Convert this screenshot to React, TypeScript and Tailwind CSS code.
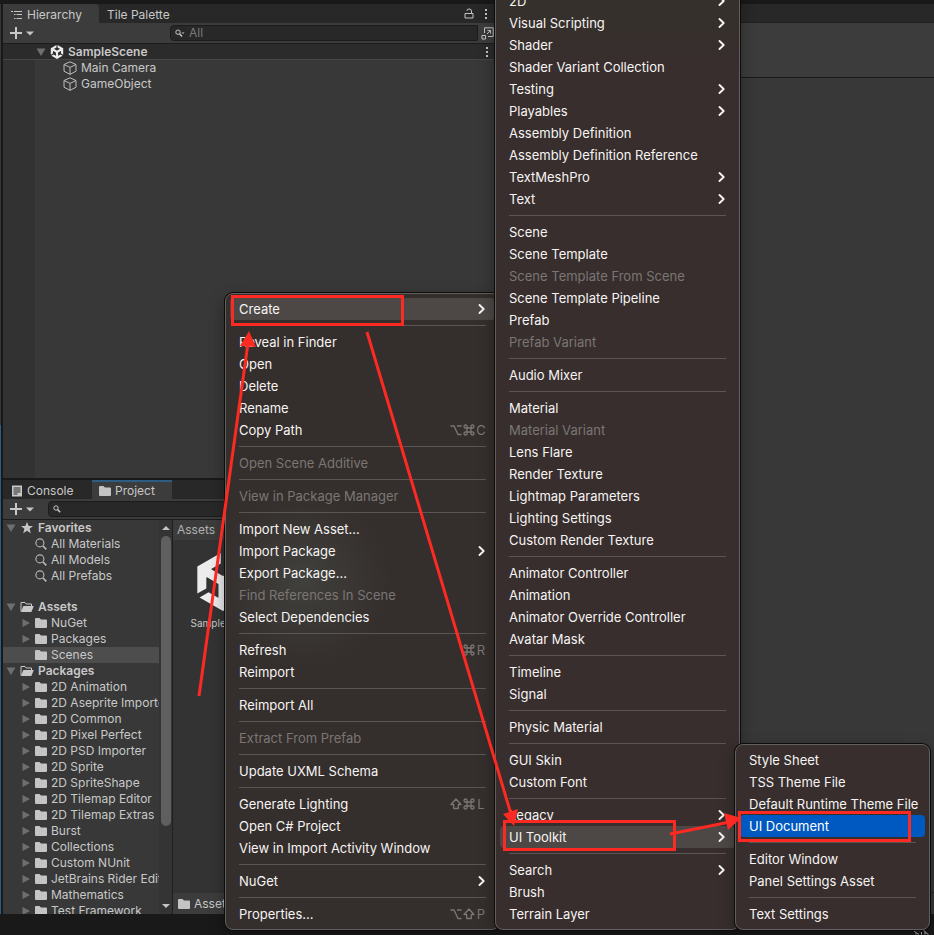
import React from "react";
import { clsx } from "clsx";
import { SiUnity } from "react-icons/si";

type Item =
  | "-"
  | { label: string; disabled?: boolean; sub?: boolean; keys?: string; state?: "open" | "picked" };

const i = (label: string): Item => ({ label });
const sub = (label: string): Item => ({ label, sub: true });
const off = (label: string): Item => ({ label, disabled: true });

const contextMenu: Item[] = [
  { label: "Create", sub: true, state: "open" },
  "-",
  i("Reveal in Finder"),
  i("Open"),
  i("Delete"),
  i("Rename"),
  { label: "Copy Path", keys: "⌥⌘C" },
  "-",
  off("Open Scene Additive"),
  "-",
  off("View in Package Manager"),
  "-",
  i("Import New Asset..."),
  sub("Import Package"),
  i("Export Package..."),
  off("Find References In Scene"),
  i("Select Dependencies"),
  "-",
  { label: "Refresh", keys: "⌘R" },
  i("Reimport"),
  "-",
  i("Reimport All"),
  "-",
  off("Extract From Prefab"),
  "-",
  i("Update UXML Schema"),
  "-",
  { label: "Generate Lighting", keys: "⇧⌘L" },
  i("Open C# Project"),
  i("View in Import Activity Window"),
  "-",
  sub("NuGet"),
  "-",
  { label: "Properties...", keys: "⌥⇧P" },
];

const createMenu: Item[] = [
  sub("2D"),
  sub("Visual Scripting"),
  sub("Shader"),
  i("Shader Variant Collection"),
  sub("Testing"),
  sub("Playables"),
  i("Assembly Definition"),
  i("Assembly Definition Reference"),
  sub("TextMeshPro"),
  sub("Text"),
  "-",
  i("Scene"),
  i("Scene Template"),
  off("Scene Template From Scene"),
  i("Scene Template Pipeline"),
  i("Prefab"),
  off("Prefab Variant"),
  "-",
  i("Audio Mixer"),
  "-",
  i("Material"),
  off("Material Variant"),
  i("Lens Flare"),
  i("Render Texture"),
  i("Lightmap Parameters"),
  i("Lighting Settings"),
  i("Custom Render Texture"),
  "-",
  i("Animator Controller"),
  i("Animation"),
  i("Animator Override Controller"),
  i("Avatar Mask"),
  "-",
  i("Timeline"),
  i("Signal"),
  "-",
  i("Physic Material"),
  "-",
  i("GUI Skin"),
  i("Custom Font"),
  "-",
  sub("Legacy"),
  { label: "UI Toolkit", sub: true, state: "open" },
  "-",
  sub("Search"),
  i("Brush"),
  i("Terrain Layer"),
];

const toolkitMenu: Item[] = [
  i("Style Sheet"),
  i("TSS Theme File"),
  i("Default Runtime Theme File"),
  { label: "UI Document", state: "picked" },
  "-",
  i("Editor Window"),
  i("Panel Settings Asset"),
  "-",
  i("Text Settings"),
];

const packages = [
  "2D Animation",
  "2D Aseprite Importer",
  "2D Common",
  "2D Pixel Perfect",
  "2D PSD Importer",
  "2D Sprite",
  "2D SpriteShape",
  "2D Tilemap Editor",
  "2D Tilemap Extras",
  "Burst",
  "Collections",
  "Custom NUnit",
  "JetBrains Rider Editor",
  "Mathematics",
  "Test Framework",
];

function KeyGlyph({ glyph }: { glyph: string }) {
  const common = { width: 12, height: 12, fill: "none", stroke: "currentColor", strokeWidth: 1.3 };
  if (glyph === "⌥")
    return (
      <svg viewBox="0 0 12 12" {...common} aria-label="Option">
        <path d="M0.5 2H4L8 10.5H11.5M7 2H11.5" />
      </svg>
    );
  if (glyph === "⌘")
    return (
      <svg viewBox="0 0 12 12" {...common} aria-label="Command">
        <path d="M4 4H8V8H4ZM4 4H2.7A1.5 1.5 0 1 1 4 2.7ZM8 4V2.7A1.5 1.5 0 1 1 9.3 4ZM8 8H9.3A1.5 1.5 0 1 1 8 9.3ZM4 8V9.3A1.5 1.5 0 1 1 2.7 8Z" />
      </svg>
    );
  if (glyph === "⇧")
    return (
      <svg viewBox="0 0 12 12" {...common} aria-label="Shift">
        <path d="M6 1L11 6.5H8.3V10.5H3.7V6.5H1Z" strokeLinejoin="round" />
      </svg>
    );
  return <span className="w-[10px] text-center">{glyph}</span>;
}

function Menu({ items, label, className }: { items: Item[]; label: string; className: string }) {
  return (
    <div
      role="menu"
      aria-label={label}
      className={clsx(
        "absolute flex flex-col rounded-lg border border-[#62605e] p-1 text-[13px] font-normal text-[#f6f4f3] shadow-[0_0_0_1px_#0c0c0c,0_6px_16px_rgba(0,0,0,0.35)]",
        className
      )}
    >
      {items.map((item, n) =>
        item === "-" ? (
          <div key={n} role="separator" className="mx-[9px] flex h-[11px] items-center">
            <div className="h-px w-full bg-[#5a5654]" />
          </div>
        ) : (
          <button
            key={n}
            type="button"
            role="menuitem"
            disabled={item.disabled}
            className={clsx(
              "flex h-[22px] w-full items-center justify-between rounded px-[9px] text-left whitespace-nowrap",
              item.disabled && "text-[#7b7674]",
              item.state === "open" && "bg-[#4d4846]",
              item.state === "picked" && "bg-[#0059c1] text-white"
            )}
          >
            <span>{item.label}</span>
            {item.sub && (
              <svg width="8" height="12" viewBox="0 0 8 12" fill="none" stroke="currentColor" strokeWidth="1.9" strokeLinecap="round" strokeLinejoin="round" aria-hidden="true">
                <path d="M1.5 2L5.7 6L1.5 10" />
              </svg>
            )}
            {item.keys && (
              <span className="flex items-center gap-px text-[#7b7674]">
                {item.keys.split("").map((k) => (
                  <KeyGlyph key={k} glyph={k} />
                ))}
              </span>
            )}
          </button>
        )
      )}
    </div>
  );
}

function Folder({ open }: { open?: boolean }) {
  return open ? (
    <svg className="shrink-0" width="14" height="12" viewBox="0 0 14 12" fill="none" aria-hidden="true">
      <path d="M1 10.5V1.5H5L6.2 3H11.5V5" stroke="#c8c8c8" />
      <path d="M3.4 5H13.8L11.4 11H0.8Z" fill="#c8c8c8" />
    </svg>
  ) : (
    <svg className="shrink-0" width="12" height="12" viewBox="0 0 12 12" fill="#c4c4c4" aria-hidden="true">
      <path d="M0 2Q0 1 1 1H4.5L6 2.6H11Q12 2.6 12 3.6V10Q12 11 11 11H1Q0 11 0 10Z" />
    </svg>
  );
}

function Fold({ open, hidden }: { open?: boolean; hidden?: boolean }) {
  return (
    <svg className={clsx("shrink-0", hidden && "invisible")} width="10" height="10" viewBox="0 0 10 10" fill="#6e6e6e" aria-hidden="true">
      <path d={open ? "M0.5 1.5H9.5L5 9Z" : "M1.5 1L9 5L1.5 9Z"} />
    </svg>
  );
}

function Lens() {
  return (
    <svg className="shrink-0" width="12" height="12" viewBox="0 0 12 12" fill="none" stroke="#b8b8b8" aria-hidden="true">
      <circle cx="4.9" cy="4.9" r="4" strokeWidth="1.1" />
      <path d="M8 8L11.3 11.3" strokeWidth="1.7" />
    </svg>
  );
}

function Cube() {
  return (
    <svg className="shrink-0" width="14" height="14" viewBox="0 0 14 14" fill="none" stroke="#bdbdbd" strokeLinejoin="round" aria-hidden="true">
      <path d="M7 0.8L13 3.5V10.2L7 13.4L1 10.2V3.5ZM1 3.5L7 6.4L13 3.5M7 6.4V13.4" />
    </svg>
  );
}

function Dots() {
  return (
    <svg width="4" height="12" viewBox="0 0 4 12" fill="#c4c4c4" aria-hidden="true">
      <path d="M1 1h2v2H1ZM1 5h2v2H1ZM1 9h2v2H1Z" />
    </svg>
  );
}

function AddButton() {
  return (
    <button type="button" aria-label="Add" className="flex shrink-0 items-center gap-1">
      <svg width="12" height="12" viewBox="0 0 12 12" stroke="#c8c8c8" strokeWidth="2" aria-hidden="true">
        <path d="M6 0V12M0 6H12" />
      </svg>
      <svg width="8" height="5" viewBox="0 0 8 5" fill="#c4c4c4" aria-hidden="true">
        <path d="M0 0.5H8L4 4.5Z" />
      </svg>
    </button>
  );
}

function TreeRow({ label, head, open, icon, selected, leaf }: { label: string; head?: boolean; open?: boolean; icon: React.ReactNode; selected?: boolean; leaf?: boolean }) {
  return (
    <li
      className={clsx(
        "flex h-4 shrink-0 items-center gap-1 overflow-hidden whitespace-nowrap",
        head ? "pl-[3px] font-semibold" : "pl-[18px]",
        selected && "bg-[#4d4d4d]"
      )}
    >
      <Fold open={open} hidden={leaf} />
      {icon}
      <span>{label}</span>
    </li>
  );
}

function Hierarchy() {
  return (
    <section aria-label="Hierarchy" className="flex h-[474px] shrink-0 flex-col bg-[#383838]">
      <div className="flex h-[19px] shrink-0 items-center bg-[#282828]">
        <button type="button" className="flex h-full w-24 items-center gap-1 rounded-tr bg-[#3c3c3c] pt-[2px] pl-2">
          <svg width="12" height="10" viewBox="0 0 12 10" stroke="#c4c4c4" aria-hidden="true">
            <path d="M0 1.5H2M3 1.5H11M3 4.5H4.5M5.5 4.5H11M3 8.5H4.5M5.5 8.5H11" />
          </svg>
          Hierarchy
        </button>
        <button type="button" className="ml-2 flex-1 pt-[2px] text-left">Tile Palette</button>
        <svg width="10" height="11" viewBox="0 0 10 11" fill="none" stroke="#c4c4c4" aria-hidden="true">
          <path d="M1 5.5H9V10H1ZM3 3V2.5Q3 1 5 1Q7.5 1 7.5 3V5.5" />
        </svg>
        <span className="mr-2 ml-[10px] flex"><Dots /></span>
      </div>
      <div className="flex h-[20px] shrink-0 items-center bg-[#3c3c3c] pl-[7px]">
        <AddButton />
        <label className="ml-[136px] flex h-4 min-w-0 flex-1 items-center gap-1 rounded-l border border-[#1c1c1c] bg-[#282828] pl-1">
          <svg width="10" height="9" viewBox="0 0 10 9" fill="none" stroke="#c4c4c4" aria-hidden="true">
            <circle cx="3" cy="3.2" r="2.2" />
            <path d="M4.6 4.8L7 7.5" strokeWidth="1.5" />
            <path d="M6.5 3.5H9.5L8 5Z" fill="#c4c4c4" stroke="none" />
          </svg>
          <input aria-label="Search hierarchy" placeholder="All" className="min-w-0 flex-1 bg-transparent text-xs outline-none placeholder:text-[#7a7a7a]" />
        </label>
        <button type="button" aria-label="Open search window" className="flex w-[18px] justify-center">
          <svg width="13" height="13" viewBox="0 0 13 13" fill="none" stroke="#c4c4c4" aria-hidden="true">
            <path d="M3.5 6V0.8H12.2V9.5H7M1 8.5H4.5V12H1ZM6 7L9.5 3.5M6.5 3.5H9.5V6.5" />
          </svg>
        </button>
      </div>
      <div className="flex h-[17px] shrink-0 items-center gap-1 border-y border-t-[#1c1c1c] border-b-[#454545] bg-[#2b2b2b] pl-[33px] font-semibold">
        <Fold open />
        <SiUnity size={14} className="shrink-0 text-[#ececec]" aria-hidden="true" />
        <span className="flex-1">SampleScene</span>
        <span className="mr-[7px]"><Dots /></span>
      </div>
      <div className="flex min-h-0 flex-1">
        <div className="w-8 shrink-0 bg-[#323232]" />
        <ul className="flex flex-1 flex-col pl-7">
          {["Main Camera", "GameObject"].map((name) => (
            <li key={name} className="flex h-4 items-center gap-1">
              <Cube />
              {name}
            </li>
          ))}
        </ul>
      </div>
    </section>
  );
}

function Project() {
  return (
    <section aria-label="Project" className="flex min-h-0 flex-1 flex-col bg-[#383838]">
      <div className="flex h-[19px] shrink-0 items-center bg-[#282828]">
        <button type="button" className="flex h-full w-[89px] items-center gap-1 pt-[2px] pl-2">
          <svg width="12" height="12" viewBox="0 0 12 12" aria-hidden="true">
            <path d="M1 0.5H11V11.5H1Z" fill="#c8c8c8" />
            <path d="M2.5 3H9.5M2.5 5H9.5M2.5 7H9.5M2.5 9H6.5" stroke="#282828" />
          </svg>
          Console
        </button>
        <button type="button" className="flex h-full w-20 items-center gap-1 border-t-2 border-[#2c5d87] bg-[#3c3c3c] pl-[7px]">
          <Folder />
          Project
        </button>
      </div>
      <div className="flex h-[21px] shrink-0 items-center border-b border-[#1c1c1c] bg-[#3c3c3c] pl-[7px]">
        <AddButton />
        <label className="ml-[14px] flex h-4 flex-1 items-center gap-1 rounded-l border border-[#1c1c1c] bg-[#282828] pl-1">
          <svg width="8" height="8" viewBox="0 0 8 8" fill="none" stroke="#c4c4c4" aria-hidden="true">
            <circle cx="3" cy="3" r="2.2" />
            <path d="M4.6 4.6L7.2 7.2" strokeWidth="1.5" />
          </svg>
          <input aria-label="Search project" className="min-w-0 flex-1 bg-transparent text-xs outline-none" />
        </label>
      </div>
      <div className="flex min-h-0 flex-1">
        <ul className="flex w-[156px] shrink-0 flex-col overflow-hidden">
          <TreeRow head open label="Favorites" icon={
            <svg width="14" height="12" viewBox="0 0 14 12" fill="#c4c4c4" aria-hidden="true">
              <path d="M7 0L8.7 4H13L9.6 6.8L10.8 11.2L7 8.7L3.2 11.2L4.4 6.8L1 4H5.3Z" />
            </svg>
          } />
          {["All Materials", "All Models", "All Prefabs"].map((s) => (
            <TreeRow key={s} leaf label={s} icon={<Lens />} />
          ))}
          <li aria-hidden="true" className="h-[15px] shrink-0" />
          <TreeRow head open label="Assets" icon={<Folder open />} />
          <TreeRow label="NuGet" icon={<Folder />} />
          <TreeRow label="Packages" icon={<Folder />} />
          <TreeRow leaf selected label="Scenes" icon={<Folder />} />
          <TreeRow head open label="Packages" icon={<Folder open />} />
          {packages.map((p) => (
            <TreeRow key={p} label={p} icon={<Folder />} />
          ))}
        </ul>
        <div className="flex w-[14px] shrink-0 flex-col items-center border-r border-[#1f1f1f] bg-[#343434] py-1">
          <svg width="8" height="4" viewBox="0 0 8 4" fill="#c4c4c4" className="mt-[2px]" aria-hidden="true"><path d="M0 4H8L4 0Z" /></svg>
          <div className="mt-[6px] h-[290px] w-[10px] shrink-0 rounded-full bg-[#5f5f5f]" />
          <svg className="mt-auto mb-[2px]" width="8" height="4" viewBox="0 0 8 4" fill="#c4c4c4" aria-hidden="true"><path d="M0 0H8L4 4Z" /></svg>
        </div>
        <div className="flex min-w-0 flex-1 flex-col bg-[#333333]">
          <div className="flex h-5 shrink-0 items-center bg-[#3c3c3c] pl-1 text-[#b0b0b0]">Assets</div>
          <div className="flex w-[100px] flex-1 flex-col items-center gap-1 pt-[13px] text-[10px]">
            <SiUnity size={58} className="text-[#ececec]" aria-hidden="true" />
            <span>SampleScene</span>
          </div>
          <div className="flex h-[21px] shrink-0 items-center gap-1 bg-[#3c3c3c] pl-[5px]">
            <Folder />
            Assets
          </div>
        </div>
      </div>
    </section>
  );
}

export default function App() {
  return (
    <div className="relative flex h-screen min-h-[935px] flex-col overflow-hidden bg-[#191919] pt-1 font-['Inter',sans-serif] text-[12px] leading-4 text-[#c8c8c8]">
      <main className="flex min-h-0 flex-1">
        <div className="flex w-[3px] shrink-0 flex-col">
          <div className="h-[421px] w-px bg-[#363636]" />
          <div className="w-px flex-1 bg-[#2c5d87]" />
        </div>
        <div className="flex w-[493px] shrink-0 flex-col gap-[2px]">
          <Hierarchy />
          <Project />
        </div>
        <section aria-label="Inspector" className="flex flex-1 flex-col bg-[#383838]">
          <div className="h-[19px] border-b border-[#1f1f1f] bg-[#282828]" />
          <div className="h-[55px] border-b border-[#191919] bg-[#3c3c3c]" />
          <div className="flex-1" />
          <div className="h-[22px] border-t border-[#242424]" />
        </section>
      </main>
      <footer className="flex h-[21px] shrink-0 items-end justify-end bg-[#191919] pr-[5px]">
        <svg width="15" height="5" viewBox="0 0 15 5" fill="none" stroke="#b4b4b4" aria-hidden="true">
          <path d="M0 1L5 4.5M2 4.5V3M5 1Q8 -1 11 1V4.5M11 2L14.5 4.5M7.5 2V4.5" />
        </svg>
      </footer>

      <Menu items={contextMenu} label="Asset actions" className="top-[293px] left-[225px] w-[275px] bg-[#342e2c] bg-[radial-gradient(circle_at_76px_286px,#40403c_0,#342e2c_90px)]" />
      <Menu items={createMenu} label="Create" className="-top-[15px] left-[495px] w-[245px] bg-linear-to-b from-[#35302b] from-3% to-[#372e2d] to-8%" />
      <Menu items={toolkitMenu} label="UI Toolkit" className="top-[744px] left-[735px] w-[195px] bg-[#372e2d]" />

      <svg className="pointer-events-none absolute top-0 left-0" width="934" height="935" viewBox="0 0 934 935" fill="none" stroke="#fc2a22" strokeWidth="3" aria-hidden="true">
        <rect x="232.5" y="296.5" width="170" height="28" />
        <rect x="504.5" y="821.5" width="170" height="28" />
        <rect x="739.5" y="812.5" width="170" height="28" />
        <path d="M199 696L248 343M367 332L511 814M670 834L730 822" />
        <path d="M249 331L256 347L240 346ZM514 826L503 814L518 809ZM741 818L728 830L724 813Z" fill="#fc2a22" stroke="none" />
      </svg>
    </div>
  );
}
